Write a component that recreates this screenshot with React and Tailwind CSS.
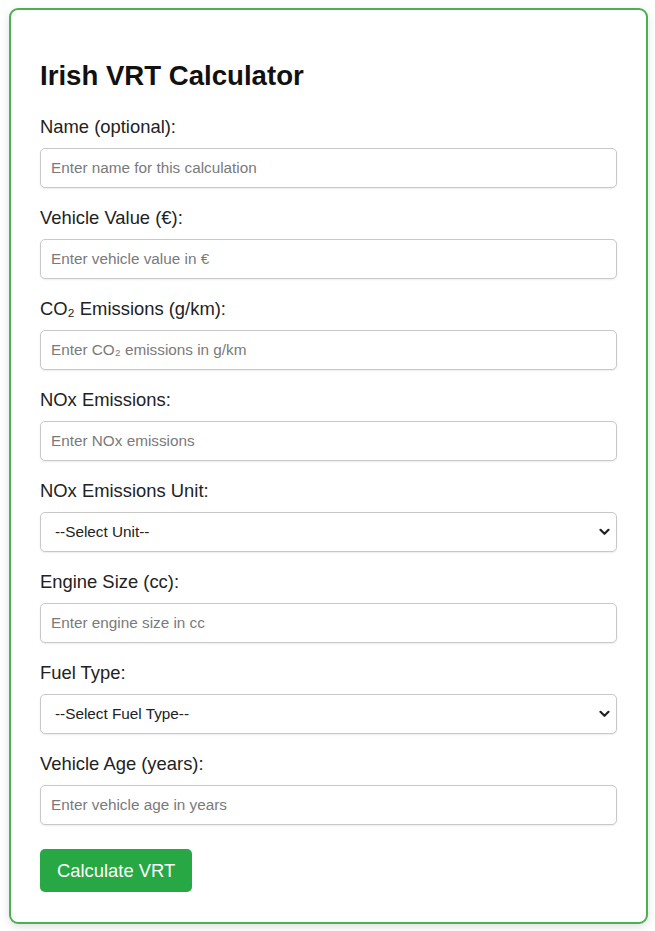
const FIELDS = [
  { label: 'Name (optional):', placeholder: 'Enter name for this calculation' },
  { label: 'Vehicle Value (€):', placeholder: 'Enter vehicle value in €' },
  { label: 'CO₂ Emissions (g/km):', placeholder: 'Enter CO₂ emissions in g/km' },
  { label: 'NOx Emissions:', placeholder: 'Enter NOx emissions' },
  { label: 'NOx Emissions Unit:', select: '--Select Unit--' },
  { label: 'Engine Size (cc):', placeholder: 'Enter engine size in cc' },
  { label: 'Fuel Type:', select: '--Select Fuel Type--' },
  { label: 'Vehicle Age (years):', placeholder: 'Enter vehicle age in years' },
]

function Chevron() {
  return (
    <svg
      className="pointer-events-none absolute right-[7px] top-1/2 -translate-y-1/2"
      width="11"
      height="8"
      viewBox="0 0 11 8"
      fill="none"
    >
      <path d="M1.5 1.8 5.5 5.8 9.5 1.8" stroke="#222" strokeWidth="2.2" strokeLinecap="round" strokeLinejoin="round" />
    </svg>
  )
}

function Field({ label, placeholder, select }) {
  return (
    <div className="mb-[19px]">
      <label className="mb-[11px] block h-[21px] text-[18.4px] leading-[21px] text-[#222]">
        {label}
      </label>
      {select ? (
        <div className="relative">
          <select className="h-[40px] w-full appearance-none rounded-[5px] border border-[#c8c8c8] bg-white pl-[14px] text-[15.3px] text-[#222] shadow-[0_1px_2px_rgba(0,0,0,0.08)] outline-none">
            <option>{select}</option>
          </select>
          <Chevron />
        </div>
      ) : (
        <input
          type="text"
          placeholder={placeholder}
          className="block h-[40px] w-full rounded-[5px] border border-[#c8c8c8] bg-white px-[10px] text-[15.3px] text-[#222] shadow-[0_1px_2px_rgba(0,0,0,0.08)] outline-none placeholder:text-[#7a7a7a]"
        />
      )}
    </div>
  )
}

export default function App() {
  return (
    <div className="min-h-[931px] bg-white px-[9px] pt-[8px] font-['Liberation_Sans',Arial,sans-serif]">
      <div className="w-[639px] rounded-[9px] border-2 border-[#4caf50] bg-white px-[29px] pt-[29px] pb-[30px] shadow-[0_3px_8px_rgba(0,0,0,0.12)]">
        <h2 className="mt-[21px] mb-[24px] h-[32px] text-[27.6px] leading-[32px] font-bold text-[#111]">
          Irish VRT Calculator
        </h2>
        {FIELDS.map((f) => (
          <Field key={f.label} {...f} />
        ))}
        <button
          type="button"
          className="mt-[5px] h-[43px] rounded-[5px] bg-[#28a745] px-[17px] text-[18.4px] text-white"
        >
          Calculate VRT
        </button>
      </div>
    </div>
  )
}
